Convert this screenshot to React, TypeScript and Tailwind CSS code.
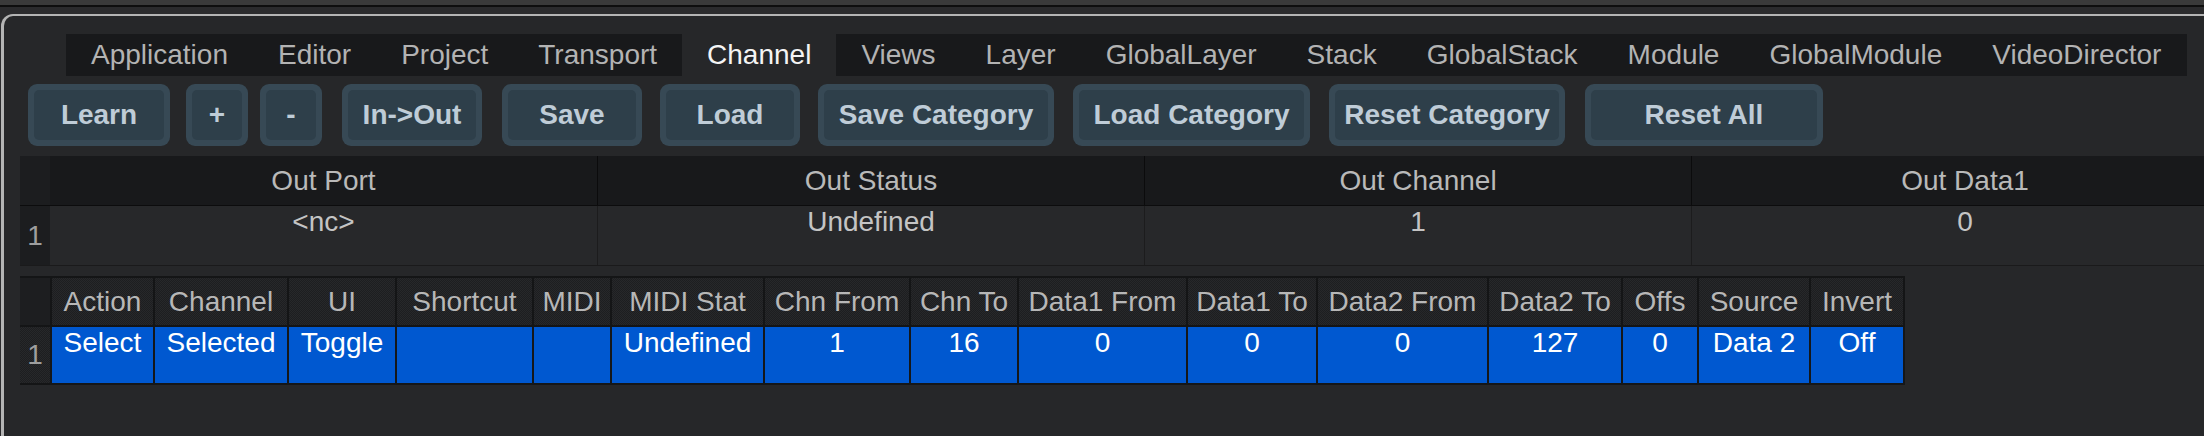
const tabs = [
  'Application',
  'Editor',
  'Project',
  'Transport',
  'Channel',
  'Views',
  'Layer',
  'GlobalLayer',
  'Stack',
  'GlobalStack',
  'Module',
  'GlobalModule',
  'VideoDirector',
]

const buttons = [
  { label: 'Learn', cls: 'ml-[24px] w-[142px]' },
  { label: '+', cls: 'ml-[16px] w-[62px]' },
  { label: '-', cls: 'ml-[12px] w-[62px]' },
  { label: 'In->Out', cls: 'ml-[20px] w-[140px]' },
  { label: 'Save', cls: 'ml-[20px] w-[140px]' },
  { label: 'Load', cls: 'ml-[18px] w-[140px]' },
  { label: 'Save Category', cls: 'ml-[18px] w-[236px]' },
  { label: 'Load Category', cls: 'ml-[19px] w-[237px]' },
  { label: 'Reset Category', cls: 'ml-[19px] w-[236px]' },
  { label: 'Reset All', cls: 'ml-[20px] w-[238px]' },
]

const outColumns = [
  { title: 'Out Port', value: '<nc>' },
  { title: 'Out Status', value: 'Undefined' },
  { title: 'Out Channel', value: '1' },
  { title: 'Out Data1', value: '0' },
]

const mapColumns = [
  { title: 'Action', value: 'Select', w: 'w-[103px]' },
  { title: 'Channel', value: 'Selected', w: 'w-[134px]' },
  { title: 'UI', value: 'Toggle', w: 'w-[108px]' },
  { title: 'Shortcut', value: '', w: 'w-[137px]' },
  { title: 'MIDI', value: '', w: 'w-[78px]' },
  { title: 'MIDI Stat', value: 'Undefined', w: 'w-[153px]' },
  { title: 'Chn From', value: '1', w: 'w-[146px]' },
  { title: 'Chn To', value: '16', w: 'w-[108px]' },
  { title: 'Data1 From', value: '0', w: 'w-[169px]' },
  { title: 'Data1 To', value: '0', w: 'w-[130px]' },
  { title: 'Data2 From', value: '0', w: 'w-[171px]' },
  { title: 'Data2 To', value: '127', w: 'w-[134px]' },
  { title: 'Offs', value: '0', w: 'w-[76px]' },
  { title: 'Source', value: 'Data 2', w: 'w-[112px]' },
  { title: 'Invert', value: 'Off', w: 'w-[96px]' },
]

const dither =
  'bg-[repeating-conic-gradient(#27282a_0%_25%,#1d1e20_0%_50%)] bg-[length:2px_2px]'

export default function App() {
  return (
    <div className="w-[2204px] h-[436px] overflow-hidden bg-[#2b2b2d] font-['Liberation_Sans',Arial,sans-serif] text-[28px] leading-[32px] antialiased">
      <div className="h-[5px] bg-[#3a3a3a]" />
      <div className="h-[2px] bg-[#0e0e0e]" />
      <div className="h-[7px]" />
      <div className="ml-px h-[450px] w-[2240px] border-t-2 border-l-[3px] border-[#b4b4b4] rounded-tl-[12px] bg-[#262729]">
        {/* category tabs */}
        <div className="mt-[18px] ml-[62px] flex h-[42px] w-[2121px] bg-[#18191b]">
          {tabs.map((t) =>
            t === 'Channel' ? (
              <div key={t} className="flex items-center px-[25px] bg-[#262729] text-[#f4f4f4]">
                {t}
              </div>
            ) : (
              <div key={t} className="flex items-center px-[25px] text-[#b3b3b3]">
                {t}
              </div>
            )
          )}
        </div>

        {/* toolbar */}
        <div className="mt-[8px] flex h-[62px]">
          {buttons.map((b) => (
            <div key={b.label} className={`${b.cls} shrink-0 rounded-[9px] bg-[#374955] p-[6px]`}>
              <div className="flex h-full items-center justify-center rounded-[5px] bg-[#2e3f4a] font-bold text-[#bfccd7]">
                {b.label}
              </div>
            </div>
          ))}
        </div>

        {/* out table */}
        <div className="mt-[10px] ml-[16px] flex w-[2220px] flex-col">
          <div className="flex h-[50px] border-b border-[#0c0c0d] bg-[#18191b] text-[#b9b9b9]">
            <div className="w-[30px] shrink-0 bg-[#1c1d1f]" />
            {outColumns.map((c, i) => (
              <div
                key={c.title}
                className={`flex w-[547px] shrink-0 items-center justify-center ${i > 0 ? 'border-l border-[#0b0b0c]' : ''}`}
              >
                {c.title}
              </div>
            ))}
          </div>
          <div className="flex h-[60px] border-b border-[#1a1a1b] bg-[#27282a] text-[#c4c4c4]">
            <div className="flex w-[30px] shrink-0 items-center justify-center bg-[#1c1d1f] text-[#9e9e9e]">1</div>
            {outColumns.map((c, i) => (
              <div
                key={c.title}
                className={`w-[547px] shrink-0 text-center ${i > 0 ? 'border-l border-[#1c1c1d]' : ''}`}
              >
                {c.value}
              </div>
            ))}
          </div>
        </div>

        {/* mapping table */}
        <div className="mt-[10px] ml-[16px] flex flex-col">
          <div className="flex h-[51px]">
            <div className="w-[30px] shrink-0 border-y-2 border-[#141516] bg-[#1d1e20]" />
            {mapColumns.map((c, i) => (
              <div
                key={c.title}
                className={`${c.w} ${dither} flex shrink-0 items-center justify-center border-y-2 border-l-2 border-[#141516] text-[#b7b7b7] ${i === mapColumns.length - 1 ? 'border-r-2' : ''}`}
              >
                {c.title}
              </div>
            ))}
          </div>
          <div className="flex h-[58px]">
            <div className={`flex w-[30px] shrink-0 items-center justify-center border-b-2 border-[#141516] ${dither} text-[#9e9e9e]`}>
              1
            </div>
            {mapColumns.map((c, i) => (
              <div
                key={c.title}
                className={`${c.w} shrink-0 border-b-2 border-l-2 border-[#151719] bg-[#0058d0] text-center text-white ${i === mapColumns.length - 1 ? 'border-r-2' : ''}`}
              >
                {c.value}
              </div>
            ))}
          </div>
        </div>
      </div>
    </div>
  )
}
